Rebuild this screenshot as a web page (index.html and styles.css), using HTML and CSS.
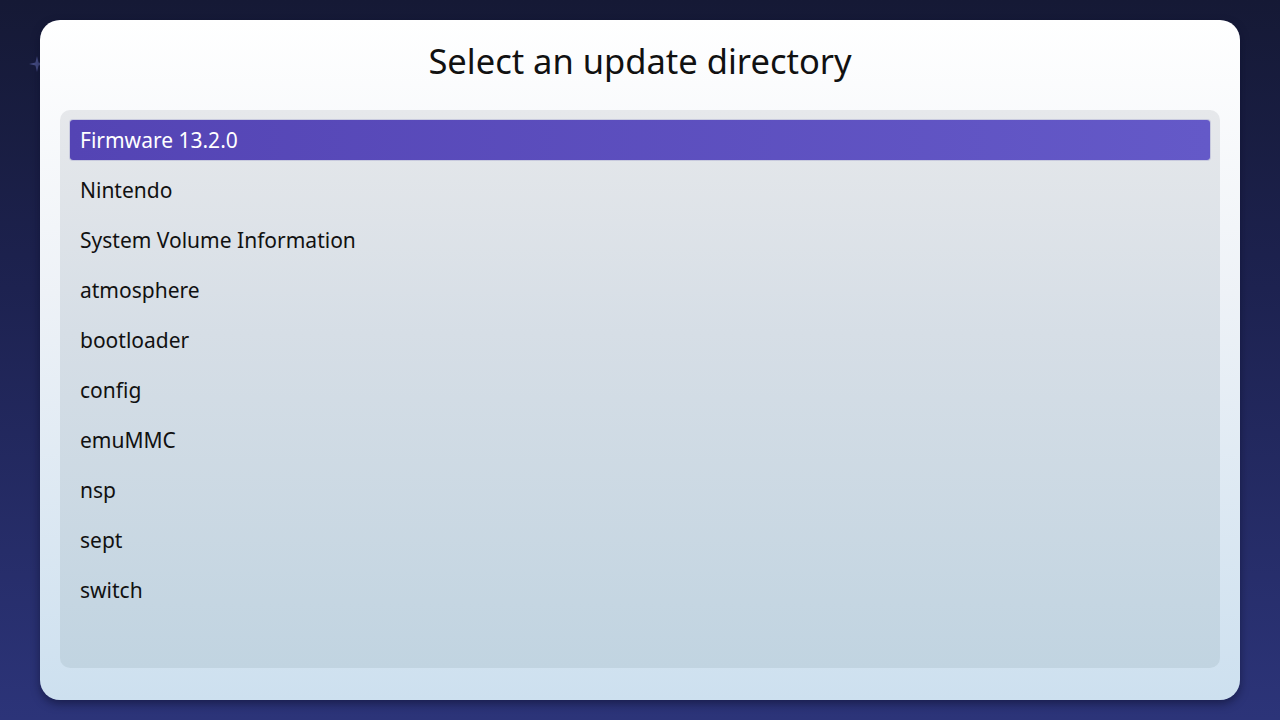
FILE: index.html
```html
<!DOCTYPE html>
<html lang="en">
<head>
<meta charset="utf-8">
<title>Select an update directory</title>
<link rel="stylesheet" href="styles.css">
</head>
<body>
<div class="screen">
  <span class="sparkle"></span>
  <div class="dialog">
    <h1 class="title">Select an update directory</h1>
    <ul class="list">
      <li class="item selected">Firmware 13.2.0</li>
      <li class="item">Nintendo</li>
      <li class="item">System Volume Information</li>
      <li class="item">atmosphere</li>
      <li class="item">bootloader</li>
      <li class="item">config</li>
      <li class="item">emuMMC</li>
      <li class="item">nsp</li>
      <li class="item">sept</li>
      <li class="item">switch</li>
    </ul>
  </div>
</div>
</body>
</html>
```
FILE: styles.css
```css
* { box-sizing: border-box; }
html, body { margin: 0; padding: 0; }
body {
  width: 1280px;
  height: 720px;
  overflow: hidden;
  font-family: "Noto Sans", "Open Sans", sans-serif;
}
.screen {
  position: relative;
  width: 1280px;
  height: 720px;
  padding: 20px 40px;
  background: linear-gradient(180deg, #151935 0%, #1d2250 40%, #2c3479 100%);
}
.sparkle {
  position: absolute;
  left: 29px;
  top: 56px;
  width: 16px;
  height: 16px;
  background: #434a80;
  clip-path: polygon(50% 0, 60% 40%, 100% 50%, 60% 60%, 50% 100%, 40% 60%, 0 50%, 40% 40%);
}
.dialog {
  position: relative;
  height: 680px;
  border-radius: 20px;
  background: linear-gradient(180deg, #ffffff 0%, #eef2f7 40%, #cde0ef 100%);
  box-shadow: 0 4px 8px rgba(10, 12, 40, 0.5);
  padding: 0 20px 32px;
  display: flex;
  flex-direction: column;
}
.title {
  margin: 0 0 10px;
  height: 80px;
  display: flex;
  align-items: center;
  justify-content: center;
  font-weight: 400;
  font-size: 34.5px;
  color: #111;
}
.list {
  flex: 1;
  margin: 0;
  list-style: none;
  padding: 10px;
  border-radius: 10px;
  background: linear-gradient(180deg, #e6e8eb 0%, #d6dee6 40%, #c1d4e1 100%);
  display: flex;
  flex-direction: column;
  gap: 10px;
}
.item {
  height: 40px;
  display: flex;
  align-items: center;
  padding-left: 10px;
  padding-bottom: 1px;
  font-size: 21px;
  color: #111;
}
.item.selected {
  background: linear-gradient(90deg, #5444b4 0%, #6459c8 100%);
  color: #fff;
  border-radius: 3px;
  box-shadow: 0 0 0 1px rgba(150, 150, 200, 0.35);
}
```
